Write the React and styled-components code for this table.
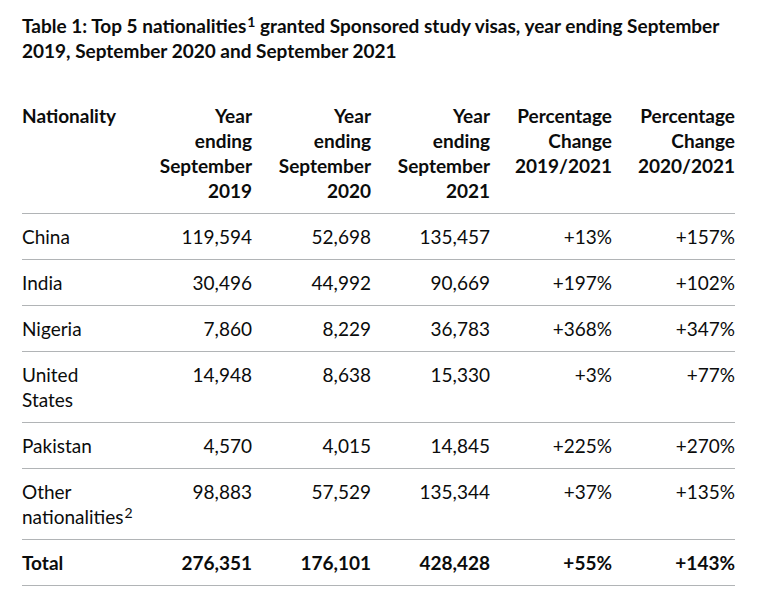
import React from "react";
import styled, { createGlobalStyle } from "styled-components";

const Global = createGlobalStyle`
  html, body { margin: 0; padding: 0; background: #ffffff; }
  body {
    font-family: Lato, "Liberation Sans", Arial, sans-serif;
    color: #0b0c0c;
    -webkit-font-smoothing: antialiased;
  }
`;

const Page = styled.main`
  width: 713px;
  padding: 13px 25px 0 22px;
`;

const Title = styled.h3`
  margin: 0 0 30px;
  font-size: 19px;
  line-height: 25px;
  font-weight: 700;
`;

const Sup = styled.sup`
  display: inline-block;
  margin-left: 1px;
  font-size: 14px;
  line-height: 14px;
  vertical-align: 6px;
  font-weight: ${(p) => (p.$bold ? 700 : 400)};
`;

const Table = styled.table`
  width: 713px;
  border-collapse: collapse;
  border-spacing: 0;
  table-layout: fixed;
  font-size: 19px;
  line-height: 25px;
`;

const Cell = styled.td`
  padding: 10px 20px 10px 0;
  border-bottom: 1px solid #b1b4b6;
  vertical-align: top;
  text-align: ${(p) => (p.$num ? "right" : "left")};
  font-weight: ${(p) => (p.$bold ? 700 : 400)};
  white-space: nowrap;
  &:last-child { padding-right: 0; }
`;

const HeadCell = styled(Cell).attrs({ as: "th" })`
  font-weight: 700;
`;

const RowHead = styled(Cell).attrs({ as: "th", scope: "row" })`
  font-weight: 400;
`;

const widths = [130, 120, 119, 119, 122, 103];

const headers = [
  ["Nationality"],
  ["Year", "ending", "September", "2019"],
  ["Year", "ending", "September", "2020"],
  ["Year", "ending", "September", "2021"],
  ["Percentage", "Change", "2019/2021"],
  ["Percentage", "Change", "2020/2021"],
];

const rows = [
  [["China"], "119,594", "52,698", "135,457", "+13%", "+157%"],
  [["India"], "30,496", "44,992", "90,669", "+197%", "+102%"],
  [["Nigeria"], "7,860", "8,229", "36,783", "+368%", "+347%"],
  [["United", "States"], "14,948", "8,638", "15,330", "+3%", "+77%"],
  [["Pakistan"], "4,570", "4,015", "14,845", "+225%", "+270%"],
  [["Other", "nationalities"], "98,883", "57,529", "135,344", "+37%", "+135%", "2"],
];

const total = ["Total", "276,351", "176,101", "428,428", "+55%", "+143%"];

function Lines({ lines }) {
  return lines.map((l, i) => (
    <React.Fragment key={i}>
      {i > 0 && <br />}
      {l}
    </React.Fragment>
  ));
}

export default function App() {
  return (
    <Page>
      <Global />
      <Title>
        Table 1: Top 5 nationalities<Sup $bold>1</Sup> granted Sponsored study visas, year ending September
        2019, September 2020 and September 2021
      </Title>
      <Table>
        <colgroup>
          {widths.map((w, i) => (
            <col key={i} style={{ width: w }} />
          ))}
        </colgroup>
        <thead>
          <tr>
            {headers.map((h, i) => (
              <HeadCell key={i} $num={i > 0} scope="col">
                <Lines lines={h} />
              </HeadCell>
            ))}
          </tr>
        </thead>
        <tbody>
          {rows.map((r, ri) => (
            <tr key={ri}>
              <RowHead>
                <Lines lines={r[0]} />
                {r[6] && <Sup>{r[6]}</Sup>}
              </RowHead>
              {r.slice(1, 6).map((v, ci) => (
                <Cell key={ci} $num>
                  {v}
                </Cell>
              ))}
            </tr>
          ))}
          <tr>
            {total.map((v, i) => (
              <Cell key={i} $num={i > 0} $bold>
                {v}
              </Cell>
            ))}
          </tr>
        </tbody>
      </Table>
    </Page>
  );
}
